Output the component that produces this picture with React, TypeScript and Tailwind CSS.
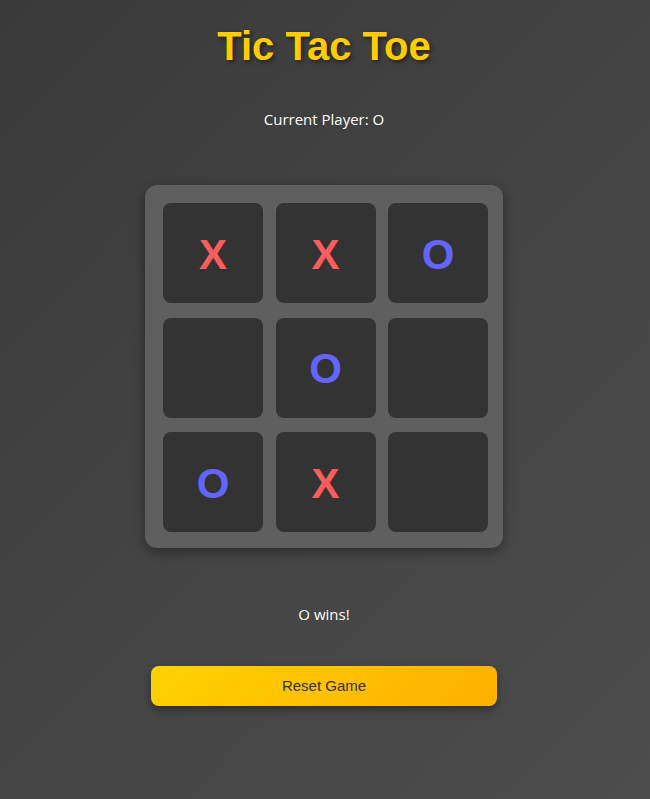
import React from "react";

const board: (string | null)[] = ["X", "X", "O", null, "O", null, "O", "X", null];

export default function App() {
  return (
    <div className="min-h-screen w-full pr-[2px] bg-[linear-gradient(135deg,#3a3a3a_0%,#4d4d4d_100%)] flex flex-col items-center font-['Open_Sans','Noto_Sans',sans-serif]">
      <h1 className="mt-[22px] leading-[48px] text-[40px] font-bold text-[#ffcc00] [text-shadow:2px_2px_4px_rgba(0,0,0,0.5)] font-['Comic_Sans_MS','Liberation_Sans',sans-serif]">
        Tic Tac Toe
      </h1>
      <p className="mt-[37px] text-[15px] leading-[24px] text-white">Current Player: O</p>
      <div className="mt-[54px] w-[358px] bg-[#5f5f5f] rounded-[12px] pt-[18px] pl-[18px] pr-[15px] pb-[16px] shadow-[0_4px_12px_rgba(0,0,0,0.35)] grid grid-cols-[100px_100px_100px] gap-x-[12.5px] gap-y-[14.5px]">
        {board.map((v, i) => (
          <div
            key={i}
            className="w-[100px] h-[100px] pt-[3px] bg-[#333333] rounded-[8px] flex items-center justify-center"
          >
            {v && (
              <span
                className={
                  "text-[42px] font-bold leading-none font-['Liberation_Sans',Arial,sans-serif] " +
                  (v === "X" ? "text-[#ff5c5c]" : "text-[#6464ff]")
                }
              >
                {v}
              </span>
            )}
          </div>
        ))}
      </div>
      <p className="mt-[54px] text-[15px] leading-[24px] text-white">O wins!</p>
      <button className="mt-[40px] w-[346px] h-[40px] rounded-[8px] bg-[linear-gradient(135deg,#ffd200_0%,#ffb000_100%)] text-[#333333] text-[15px] font-['Liberation_Sans',Arial,sans-serif] shadow-[0_4px_8px_rgba(0,0,0,0.35)]">
        Reset Game
      </button>
    </div>
  );
}
